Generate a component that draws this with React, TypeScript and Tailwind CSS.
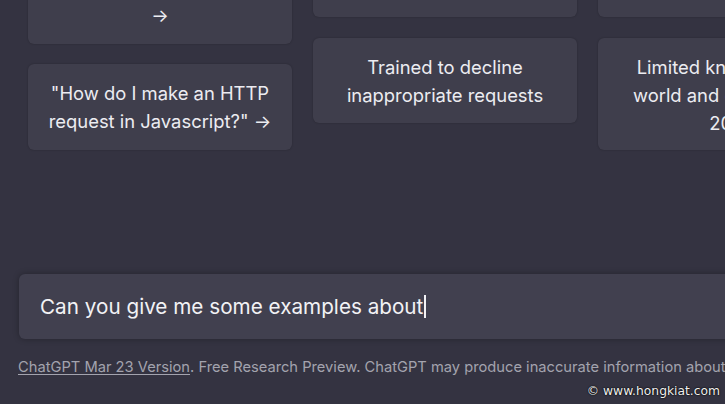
import React from "react";

function Card({ lines, className = "" }: { lines: string[]; className?: string }) {
  return (
    <div
      className={`w-[264px] shrink-0 rounded-md bg-[#3f3e4c] px-3 pt-[15px] text-center text-[18.4px] leading-[28px] text-[#ececf1] shadow-[0_0_2px_rgba(0,0,0,0.25)] ${className}`}
    >
      {lines.map((l, i) => (
        <div key={i}>{l}</div>
      ))}
    </div>
  );
}

export default function App() {
  return (
    <div
      className="relative h-[404px] w-[725px] overflow-hidden bg-[#343341]"
      style={{ fontFamily: "Inter, 'Noto Sans', sans-serif" }}
    >
      <div className="flex items-start gap-[21px] pl-[28px]">
        <div className="flex flex-col gap-[20px]">
          <Card
            className="mt-[-56px] flex h-[100px] flex-col justify-end pb-[15px]"
            lines={["year old's birthday?\"", "→"]}
          />
          <Card className="pb-[15px]" lines={["\"How do I make an HTTP", "request in Javascript?\" →"]} />
        </div>
        <div className="flex flex-col gap-[21px]">
          <Card className="mt-[-83px] flex h-[100px] flex-col justify-end pb-[15px]" lines={["corrections"]} />
          <Card className="pb-[14px]" lines={["Trained to decline", "inappropriate requests"]} />
        </div>
        <div className="flex flex-col gap-[21px]">
          <Card className="mt-[-83px] flex h-[100px] flex-col justify-end pb-[15px]" lines={["biased content"]} />
          <Card className="pb-[13px]" lines={["Limited knowledge of", "world and events after", "2021"]} />
        </div>
      </div>

      <div className="mt-[124px] pl-[19px]">
        <div className="flex h-[65px] w-[760px] items-center rounded-md bg-[#41404f] pl-[21px] shadow-[0_0_6px_rgba(0,0,0,0.3)]">
          <span className="text-[20.7px] text-[#f2f2f5]">Can you give me some examples about</span>
          <span className="ml-[1px] inline-block h-[23px] w-[1.5px] bg-[#f2f2f5]" />
        </div>
      </div>

      <div className="mt-[18px] whitespace-nowrap pl-[18px] text-[14.7px] leading-[20px] text-[#a3a3ae]">
        <span className="underline underline-offset-2">ChatGPT Mar 23 Version</span>. Free Research Preview. ChatGPT may
        produce inaccurate information about people, places, or facts.
      </div>

      <div
        className="absolute bottom-[4px] right-[5px] text-[12.3px] text-[#f0f0f0] [text-shadow:0_0_2px_#000,0_0_1px_#000]"
        style={{ fontFamily: "'DejaVu Sans', sans-serif" }}
      >
        © www.hongkiat.com
      </div>
    </div>
  );
}
